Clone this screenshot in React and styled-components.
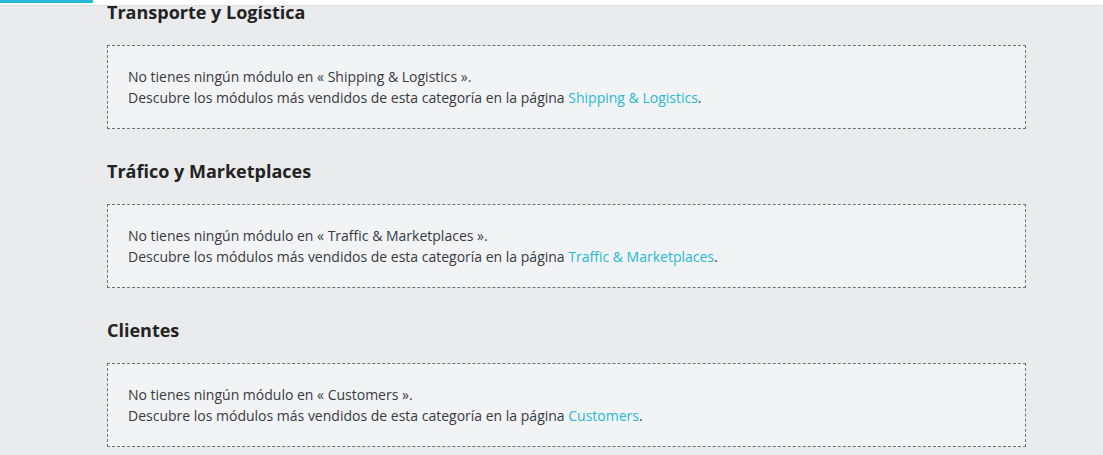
import React from "react";
import styled, { createGlobalStyle } from "styled-components";

const Global = createGlobalStyle`
  html, body { margin: 0; padding: 0; }
  body {
    background: #eaebec;
    font-family: "Open Sans", "Noto Sans", sans-serif;
    color: #363a41;
    overflow: hidden;
  }
`;

const TopBar = styled.div`
  position: fixed;
  top: 0;
  left: 0;
  right: 0;
  height: 5px;
  background: #ffffff;
  border-bottom: 1px solid #dcdee0;
  z-index: 5;
`;

const ActiveTab = styled.div`
  width: 93px;
  height: 3px;
  background: #25b9d7;
`;

const Content = styled.main`
  margin-left: 107px;
  width: 919px;
  padding-top: 0;
`;

const Section = styled.section`
  margin-bottom: 30px;
`;

const Title = styled.h2`
  margin: 0 0 21px;
  font-size: 18px;
  line-height: 24px;
  font-weight: 700;
  color: #232323;
`;

const EmptyBox = styled.div`
  border: 1px dashed #6f7275;
  background: #f2f3f4;
  padding: 20px 20px;
  font-size: 14px;
  line-height: 21px;
  color: #363a41;
`;

const Line = styled.p`
  margin: 0;
`;

const Link = styled.a`
  color: #25b9d7;
  text-decoration: none;
`;

const sections = [
  { title: "Transporte y Logística", cat: "Shipping & Logistics" },
  { title: "Tráfico y Marketplaces", cat: "Traffic & Marketplaces" },
  { title: "Clientes", cat: "Customers" },
];

export default function App() {
  return (
    <>
      <Global />
      <TopBar>
        <ActiveTab />
      </TopBar>
      <Content>
        {sections.map((s) => (
          <Section key={s.title}>
            <Title>{s.title}</Title>
            <EmptyBox>
              <Line>No tienes ningún módulo en « {s.cat} ».</Line>
              <Line>
                Descubre los módulos más vendidos de esta categoría en la página{" "}
                <Link href="#">{s.cat}</Link>.
              </Line>
            </EmptyBox>
          </Section>
        ))}
      </Content>
    </>
  );
}
